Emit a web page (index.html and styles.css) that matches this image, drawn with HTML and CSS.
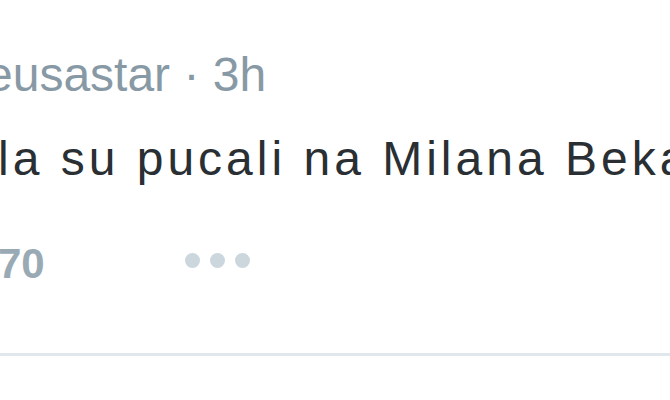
FILE: index.html
```html
<!DOCTYPE html>
<html>
<head>
<meta charset="utf-8">
<link rel="stylesheet" href="styles.css">
</head>
<body>
<div class="tweet">
  <div class="header"><span class="handle">eusastar</span> <span class="sep">·</span> <span class="time">3h</span></div>
  <div class="text">la su pucali na Milana Bekana</div>
  <div class="actions">
    <span class="count">70</span>
    <span class="more"><i class="dot"></i><i class="dot"></i><i class="dot"></i></span>
  </div>
</div>
</body>
</html>
```
FILE: styles.css
```css
html, body {
  margin: 0;
  padding: 0;
  background: #ffffff;
  width: 670px;
  height: 400px;
  overflow: hidden;
}
.tweet {
  padding-top: 45px;
  padding-bottom: 59px;
  border-bottom: 3px solid #e1e8ed;
  font-family: "Liberation Sans", Arial, sans-serif;
  white-space: nowrap;
}
.header {
  font-size: 48px;
  line-height: 60px;
  height: 60px;
  color: #8899a6;
  margin-left: -14px;
}
.text {
  margin-top: 24px;
  font-size: 48px;
  line-height: 60px;
  height: 60px;
  letter-spacing: 4px;
  color: #292f33;
  margin-left: -2px;
}
.actions {
  margin-top: 45px;
  height: 60px;
  display: flex;
  align-items: center;
}
.count {
  font-size: 42px;
  line-height: 60px;
  font-weight: bold;
  color: #99aab5;
  margin-left: -2px;
}
.more {
  display: flex;
  gap: 10px;
  margin-left: 140px;
  margin-bottom: 8px;
}
.dot {
  display: block;
  width: 15px;
  height: 15px;
  border-radius: 50%;
  background: #ccd6dd;
}
```
